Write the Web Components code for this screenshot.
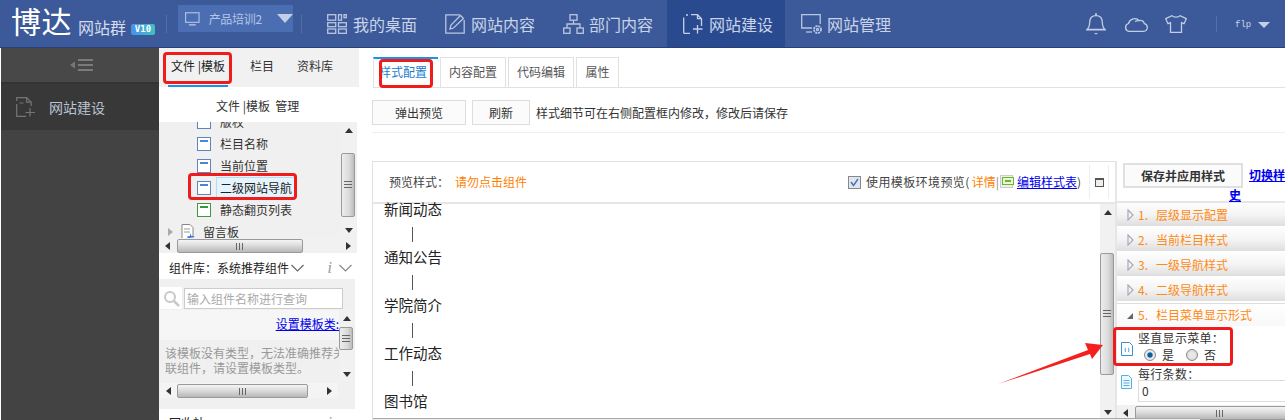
<!DOCTYPE html>
<html lang="zh-CN"><head><meta charset="utf-8"><title>博达网站群</title>
<style>
html,body{margin:0;padding:0;background:#fff}
body{width:1285px;height:420px;overflow:hidden;font:12px/16px "Noto Sans CJK SC","Liberation Sans",sans-serif;color:#333}
</style></head><body>
<app-shell>
  <app-header slot="header">
    <nav-item label="我的桌面" icon="desk"></nav-item>
    <nav-item label="网站内容" icon="edit"></nav-item>
    <nav-item label="部门内容" icon="org" style="width:120px"></nav-item>
    <nav-item label="网站建设" icon="file" active></nav-item>
    <nav-item label="网站管理" icon="mon"></nav-item>
  </app-header>
  <side-rail slot="rail"></side-rail>
  <file-panel slot="panel"></file-panel>
  <main-pane slot="main"></main-pane>
</app-shell>
<script>
const FONT='"Noto Sans CJK SC","Liberation Sans",sans-serif';
function def(tag,css,html,init){
  customElements.define(tag,class extends HTMLElement{
    connectedCallback(){
      if(this.shadowRoot)return;
      const r=this.attachShadow({mode:'open'});
      r.innerHTML='<style>'+css+'</style>'+(typeof html==='function'?html(this):html);
      if(init)init(this,r);
    }
  });
}
const icons={
 desk:'<svg width="20" height="20" viewBox="0 0 20 20" fill="none" stroke="#b9c6e2" stroke-width="1.3"><rect x=".7" y=".7" width="8" height="5.5"/><rect x="11.5" y=".7" width="3" height="5.5"/><rect x="17" y=".7" width="2.3" height="3"/><rect x=".7" y="8.7" width="8" height="4"/><rect x=".7" y="15" width="8" height="4.3"/><rect x="11.5" y="8.7" width="7.8" height="4"/><rect x="11.5" y="15" width="7.8" height="4.3"/></svg>',
 edit:'<svg width="20" height="20" viewBox="0 0 20 20" fill="none" stroke="#b9c6e2" stroke-width="1.3"><path d="M15 .8H.8v18.4h18.4V6"/><path d="M5 15l1-4L15.500 1.500l3 3L8.500 14z"/></svg>',
 org:'<svg width="21" height="20" viewBox="0 0 21 20" fill="none" stroke="#b9c6e2" stroke-width="1.3"><rect x="7" y=".7" width="7" height="5.500"/><path d="M10.500 6.200V10M4 14v-4h13v4"/><rect x=".7" y="14" width="6.300" height="5.300"/><rect x="14" y="14" width="6.300" height="5.300"/></svg>',
 file:'<svg width="20" height="20" viewBox="0 0 20 20" fill="none" stroke="#c6d0e8" stroke-width="1.3"><path d="M8 .7h6.500l4 4V12M7 19.300H1.500a.8.8 0 0 1-.8-.8V3.500M14.500.7v4h4M3 1h2"/><path d="M14.500 11v8.500M10 15h9.500"/></svg>',
 mon:'<svg width="21" height="20" viewBox="0 0 21 20" fill="none" stroke="#b9c6e2" stroke-width="1.3"><path d="M11 14H.7V.7h18.500V10"/><path d="M5 18h6"/><circle cx="16.500" cy="15.500" r="3.500" stroke-width="1.800" stroke-dasharray="2 .8"/><circle cx="16.500" cy="15.500" r="1"/></svg>'
};

def('app-shell',`:host{display:grid;grid-template:48px 372px/159px 200px 926px;width:1285px;height:420px;overflow:hidden;position:relative}
::slotted([slot=header]){grid-column:1/4}
.mark{position:absolute;box-sizing:border-box;border:3px solid #f01c1c;border-radius:4px;pointer-events:none}
svg{position:absolute;left:0;top:0;pointer-events:none}
.line{position:absolute;left:373px;top:418px;width:827px;height:2px;background:linear-gradient(#a9a9a9 50%,#eee 50%)}`,
`<slot name="header"></slot><slot name="rail"></slot><slot name="panel"></slot><slot name="main"></slot>
<div class="line"></div>
<div class="mark" style="left:163px;top:52px;width:69px;height:32px"></div>
<div class="mark" style="left:379px;top:59px;width:54px;height:29px"></div>
<div class="mark" style="left:188px;top:173px;width:109px;height:27px"></div>
<div class="mark" style="left:1113px;top:327px;width:120px;height:39px"></div>
<svg width="1285" height="420"><polygon fill="#f5201d" points="998,384 1088,350 1085,343 1103,345 1092,359 1090,354"/></svg>`);

def('app-header',`:host{display:flex;align-items:stretch;height:48px;box-sizing:border-box;background:#3c5a99;border-bottom:1px solid #27407a;color:#c9d3ea;font-family:${FONT}}
.logo{display:flex;align-items:flex-end;width:159px;box-sizing:border-box;padding:0 0 10px 11px;flex:none}
.bd{color:#fff;font-size:30px;line-height:34px;font-weight:400;letter-spacing:.5px;width:67px;flex:none}
.q{font-size:16px;line-height:20px;width:49px;flex:none;margin-bottom:0;color:#d4dcee}
.v{font:bold 9px/11px "DejaVu Sans Mono",monospace;color:#fff;background:linear-gradient(90deg,#4a90e8,#3fc2c2);border-radius:2px;padding:0 3px;margin:0 0 2px 4px;width:18px;text-align:center}
.div{width:1px;background:#5470aa;height:18px;align-self:center;flex:none}
.sel{display:flex;align-items:center;margin:5px 0 15px 11px;width:115px;background:#4b6eb3;box-sizing:border-box;padding-left:7px;flex:none;font-size:12px;line-height:16px;color:#b7c5e4}
.sel span{margin-left:9px;width:66px;letter-spacing:-.3px}
.tri{width:0;height:0;border:8px solid transparent;border-top:9px solid #c3cfe9;border-bottom:0}
.nav{display:flex;flex:none;margin-left:9px}
.right{display:flex;flex:1;align-items:center;justify-content:flex-end;padding:0 15px 0 0}
.right svg{flex:none}
.user{font:9px/14px "Liberation Mono",monospace;color:#c9d3ea;margin:3px 7px 0 0;width:16px}
.right .tri{border-width:6px 6px 0;border-top-color:#c3cfe9;margin-top:2px}`,
`<div class="logo"><span class="bd">博达</span><span class="q">网站群</span><span class="v">V10</span></div>
<div class="div" style="margin-left:7px"></div>
<div class="sel"><svg width="15" height="14" viewBox="0 0 15 14" fill="none" stroke="#b0bfe0" stroke-width="1.200"><rect x=".6" y=".6" width="13.800" height="9.800"/><path d="M4 13h7" stroke-width="1.500"/></svg><span>产品培训2</span><i class="tri" style="margin-left:4px"></i></div>
<div class="div" style="margin-left:8px"></div>
<div class="nav" style="margin-left:9px"><slot></slot></div>
<div class="right">
<svg width="20" height="22" viewBox="0 0 20 22" fill="none" stroke="#c2cde6" stroke-width="1.300" style="margin-right:18px"><path d="M1 16.500c2.500-2 2.500-4 2.800-8C4.100 4.500 6.500 2.700 10 2.700s5.900 1.800 6.200 5.800c.3 4 .3 6 2.800 8zM0 16.800h20"/><path d="M10 .3v2.300" stroke-width="1.800"/><path d="M8 20h4l-2 1.500z" fill="#c2cde6" stroke="none"/></svg>
<svg width="24" height="16" viewBox="0 0 24 16" fill="none" stroke="#c2cde6" stroke-width="1.300" style="margin-right:17px"><path d="M5 15.300h14.500a3.900 3.900 0 0 0 .8-7.700 3.800 3.800 0 0 0-5-3A6.500 6.500 0 0 0 4.500 7.500 4 4 0 0 0 5 15.300zM11 5.500c1.500-.8 3-1 4.300-.9"/></svg>
<svg width="22" height="18" viewBox="0 0 22 18" fill="none" stroke="#c2cde6" stroke-width="1.300" style="margin-right:29px"><path d="M7 .7C8 2.500 14 2.500 15 .7l6.300 3-2.300 5-2.500-1v9.600H5.500V7.700L3 8.700.7 3.700z"/></svg>
<div class="div" style="height:16px;margin-right:18px"></div>
<span class="user">flp</span><i class="tri"></i></div>`);

def('nav-item',`:host{display:flex;align-items:center;width:118px;box-sizing:border-box;height:47px;padding:0 0 0 16px;font-size:16px;line-height:20px;color:#c9d3ea;flex:none}
:host([active]){background:#2a4a90}
.i{width:26px;flex:none;display:flex}
span{white-space:nowrap}`,
t=>`<div class="i">${icons[t.getAttribute('icon')]}</div><span>${t.getAttribute('label')}</span>`);

def('side-rail',`:host{display:flex;flex-direction:column;height:372px;background:#434343;border-left:1px solid #fff;box-sizing:border-box;color:#b5bfd0}
.top{height:34px;background:#484848;border-bottom:2px solid #333;display:flex;align-items:center;justify-content:center;flex:none;padding-left:4px;box-sizing:content-box}
.row{display:flex;align-items:center;height:46px;background:#383838;padding-left:15px;font-size:14px;flex:none}
.row span{margin-left:13px;color:#b9c3d2}`,
`<div class="top"><svg width="24" height="14" viewBox="0 0 24 14"><path d="M0 7l5-3.500v7z" fill="#777"/><path d="M8 2h15M8 7h15M8 12h15" stroke="#8a8a8a" stroke-width="1.500"/></svg></div>
<div class="row"><svg width="20" height="20" viewBox="0 0 20 20" fill="none" stroke="#757575" stroke-width="1.200"><path d="M.7 7V19.300H10M.7 4V.7h10l4.500 4.500V9M10.700.7v4.500h4.500M3.500 6h4"/><path d="M14 11v8.500M9.500 15.500h9.500"/></svg><span>网站建设</span></div>`);

def('x-scroll',`:host{display:flex;flex:none;background:#f1f1f1;box-sizing:border-box;align-items:stretch}
:host([dir=h]){height:15px;flex-direction:row}
:host([dir=v]){width:15px;flex-direction:column}
.a{flex:none;display:flex;align-items:center;justify-content:center}
:host([dir=h]) .a{width:17px}
:host([dir=v]) .a{height:16px}
i{width:0;height:0;border:4px solid transparent;display:block}
.tk{flex:1;display:flex;min-width:0;min-height:0}
:host([dir=v]) .tk{flex-direction:column}
.th{box-sizing:border-box;border:1px solid #9a9a9a;border-radius:2px;display:flex;align-items:center;justify-content:center;flex:none}
:host([dir=h]) .th{background:linear-gradient(#f5f5f5,#dcdcdc 45%,#b8b8b8);height:14px;margin-top:1px}
:host([dir=v]) .th{background:linear-gradient(90deg,#ededed,#dadada 60%,#bcbcbc);width:14px;margin-left:0}
:host([dir=h]) .g{width:8px;height:7px;background:repeating-linear-gradient(90deg,#666 0 1px,transparent 1px 3px)}
:host([dir=v]) .g{width:8px;height:8px;background:repeating-linear-gradient(#666 0 1px,transparent 1px 3px)}`,
t=>{const h=t.getAttribute('dir')==='h',s=+t.getAttribute('start'),l=+t.getAttribute('len');
 const st=h?`margin-left:${s}px;width:${l}px`:`margin-top:${s}px;height:${l}px`;
 const a=h?'border-left:0;border-right-color:#333;border-right-width:5px':'border-top:0;border-bottom-color:#333;border-bottom-width:5px';
 const b=h?'border-right:0;border-left-color:#333;border-left-width:5px':'border-bottom:0;border-top-color:#333;border-top-width:5px';
 return `<div class="a"><i style="${a}"></i></div><div class="tk"><div class="th" style="${st}"><div class="g"></div></div></div><div class="a"><i style="${b}"></i></div>`});

const leaf=(c)=>`<svg width="14" height="14" viewBox="0 0 14 14"><rect x=".5" y=".5" width="13" height="13" fill="#fff" stroke="${c}"/><rect x="3" y="3" width="8" height="2" fill="${c==='#3f9a3f'?'#2f9a3a':'#4a86d8'}"/></svg>`;
def('file-panel',`:host{display:flex;flex-direction:column;width:200px;height:372px;background:#fff;overflow:hidden;font-size:12px;color:#333}
.tabs{height:39px;background:#f1f1f1;display:flex;flex:none;box-sizing:border-box;padding-top:10px;line-height:16px}
.tabs span{position:relative;white-space:nowrap}
.t1{width:60px;margin-left:9px;text-align:center;border-bottom:2px solid #1a92e8;height:27px;box-sizing:content-box;color:#222}
.t2{margin-left:22px}.t3{margin-left:23px}
.h{height:35px;line-height:37px;flex:none;padding-left:57px;color:#333;box-sizing:border-box;white-space:nowrap}
.tree{height:116px;display:flex;background:#f0f0f0;flex:none;margin-right:2px;overflow:hidden}
.lst{width:182px;flex:none;overflow:hidden;display:flex;flex-direction:column}
.r{height:22px;display:flex;align-items:center;padding-left:38px;flex:none;white-space:nowrap}
.r svg{margin-right:9px;flex:none}
.r b{font-weight:400;line-height:20px;height:20px;padding:0 3px;margin-left:-4px;background:#e6f4fd;border:1px solid #b7dcf2;color:#222;box-sizing:content-box;margin-right:-2px;width:72px;overflow:hidden}
.r.p{padding-left:9px}.r.p em{width:0;height:0;border:4px solid transparent;border-left:5px solid #aaa;border-right:0;margin-right:8px}
.lib{flex:none;height:24px;display:flex;align-items:center;padding:2px 7px 0 10px;margin-top:2px;background:#fff;white-space:nowrap;color:#222;box-sizing:border-box}
.chev{margin-left:2px}.ii{font:italic 16px/16px "Liberation Serif",serif;color:#999;margin-left:auto;margin-right:7px}
.body{flex:none;height:130px;background:#f0f0f0;margin-right:4px;padding-left:1px;display:flex;flex-direction:column}
.s{display:flex;align-items:flex-start;height:31px;flex:none;padding-top:9px;box-sizing:border-box}
.s .ic{width:22px;height:22px;background:#fff;flex:none;display:flex;align-items:center;justify-content:center}
.s input{width:159px;height:21px;box-sizing:border-box;border:1px solid #ccc;background:#fff;padding:0 2px;margin:0 0 0 2px;font:12px ${FONT};outline:0}
.s input::placeholder{color:#aaa;opacity:1}
.mid{display:flex;height:73px;flex:none}
.info{width:179px;flex:none;overflow:hidden;background:#f0f0f0}
.lnk{height:30px;background:#f6f6f6;text-align:right;padding-top:6px;box-sizing:border-box;line-height:16px}
.lnk a{color:#00e;text-decoration:underline}
.msg{color:#999;line-height:15px;padding:5px 0 0 5px;white-space:nowrap}
.foot{background:#fff;display:flex;padding:4px 7px 0 10px;color:#222;line-height:16px;height:16px;flex:none;margin-top:2px;overflow:hidden}`,
`<div class="tabs"><span class="t1">文件 |模板</span><span class="t2">栏目</span><span class="t3">资料库</span></div>
<div class="h">文件 |模板 &nbsp;管理</div>
<div class="tree"><div class="lst">
<div class="r" style="height:11px;align-items:flex-end;overflow:hidden"><span style="display:flex;align-items:center;height:22px;flex:none;margin-bottom:0">${leaf('#5f82c0')}<span>版权</span></span></div>
<div class="r">${leaf('#5f82c0')}栏目名称</div>
<div class="r">${leaf('#5f82c0')}当前位置</div>
<div class="r">${leaf('#5f82c0')}<b>二级网站导航</b></div>
<div class="r">${leaf('#3f9a3f')}静态翻页列表</div>
<div class="r p"><em></em><svg width="15" height="16" viewBox="0 0 15 16" style="margin-right:7px"><path d="M1 .5h8l3 3V15H1z" fill="#fff" stroke="#888"/><path d="M3 5h6M3 8h6" stroke="#999"/><path d="M9 9l1.500 3H14l-3 1.500-4 1-1-2 3-.5z" fill="#2f7fe0"/></svg>留言板</div>
</div><x-scroll dir="v" start="15" len="64" style="height:116px"></x-scroll></div>
<x-scroll dir="h" start="1" len="126" style="width:198px"></x-scroll>
<div class="lib">组件库：系统推荐组件<svg class="chev" width="13" height="8" viewBox="0 0 13 8" fill="none" stroke="#666" stroke-width="1.200"><path d="M.5 1l6 6 6-6"/></svg><span class="ii">i</span><svg width="13" height="8" viewBox="0 0 13 8" fill="none" stroke="#888" stroke-width="1.200"><path d="M.5 1l6 6 6-6"/></svg></div>
<div class="body">
<div class="s"><div class="ic" style="margin-top:-1px"><svg width="17" height="17" viewBox="0 0 17 17" fill="none" stroke="#c8c8c8" stroke-width="2"><circle cx="7" cy="7" r="5"/><path d="M11 11l5 5" stroke-width="2.500"/></svg></div><input placeholder="输入组件名称进行查询"></div>
<div class="mid"><div class="info"><div class="lnk"><a>设置模板类:</a></div><div class="msg">该模板没有类型，无法准确推荐关<br>联组件，请设置模板类型。</div></div>
<x-scroll dir="v" start="1" len="23" style="height:72px"></x-scroll></div>
<x-scroll dir="h" start="0" len="131" style="width:178px;background:#f4f4f4"></x-scroll>
</div>
<div class="foot"><span>回收站</span><span class="ii">i</span><svg width="13" height="8" viewBox="0 0 13 8" fill="none" stroke="#888" stroke-width="1.200" style="margin-top:5px"><path d="M.5 1l6 6 6-6"/></svg></div>`);

def('main-pane',`:host{display:flex;flex-direction:column;width:926px;height:372px;background:#fff;font-size:12px;overflow:hidden}
.tabs{display:flex;height:31px;margin:9px 0 0 14px;border-bottom:1px solid #e1e1e1;flex:none;box-sizing:border-box;gap:2px}
.tabs span{box-sizing:border-box;height:30px;border:1px solid #e1e1e1;border-bottom:0;line-height:28px;text-align:center;color:#555;flex:none}
.tabs .on{width:65px;border:0;border-top:2px solid #1a92e8;color:#1a7cd0;border-left:1px solid #e1e1e1;line-height:26px;padding-right:6px}
.tb{display:flex;align-items:center;height:45px;border-bottom:1px solid #eee;margin-left:13px;box-sizing:border-box;flex:none;padding-bottom:7px;padding-top:12px}
.tb button{height:25px;box-sizing:border-box;border:1px solid #ddd;background:#fbfbfb;font:12px ${FONT};color:#333;padding:0;flex:none}
.tb span{margin-left:6px;color:#333;white-space:nowrap}
.pv{display:flex;margin:28px 0 0 13px;flex:1;min-height:0}
.l{width:743px;flex:none;border-left:1px solid #e1e1e1;border-top:1px solid #e1e1e1;display:flex;flex-direction:column;box-sizing:border-box;overflow:hidden}
.lh{height:40px;flex:none;border-bottom:2px solid #e6e6e6;display:flex;align-items:center;padding-left:16px;color:#444;white-space:nowrap}
.or{color:#ff7f00}
.lh .o{margin-left:6px;color:#ff7f00}
.chk{margin-left:auto;width:13px;height:13px;box-sizing:border-box;border:1px solid #888;background:#dfe6f0;display:flex;flex:none}
.tx{margin-left:5px;color:#444}
.tx .ls{letter-spacing:.4px;margin-right:2px}
.tx a{color:#00e;text-decoration:underline}
.css{display:inline-flex;vertical-align:-1px;margin:0 1px 0 1px;width:11px;height:11px;border:1px solid #ccc;background:#eee;position:relative}
.bx{width:18px;height:34px;border-left:1px solid #e6f0f8;border-right:1px solid #e6f0f8;margin:0 6px 0 8px;display:flex;align-items:center;justify-content:center;flex:none}
.bx i{width:9px;height:9px;border:1px solid #555;border-top-width:2px;box-sizing:border-box;background:#eee}
.lb{flex:1;display:flex;min-height:0}
.list{flex:1;overflow:hidden;padding-left:11px;font-size:14.500px;color:#222;display:flex;flex-direction:column;margin-top:-7px}
.list p{margin:0;height:24px;line-height:24px;flex:none}
.list u{display:block;height:24px;flex:none;text-decoration:none}
.list u:before{content:"";display:block;width:1px;height:15px;background:#555;margin:6px 0 0 28px}
.r{flex:1;border-left:2px solid #e6e6e6;display:flex;flex-direction:column;box-sizing:border-box;overflow:hidden;min-width:0}
.rh{height:38px;flex:none;border-bottom:2px solid #e6e6e6;display:flex;white-space:nowrap;padding:2px 0 0 6px;position:relative}
.rh button{height:25px;width:120px;box-sizing:border-box;border:2px solid #e0e0e0;background:#fbfbfb;font:bold 12px ${FONT};color:#333;padding:0;flex:none}
.rh a{color:#00e;font-weight:700;text-decoration:underline;margin-left:6px;margin-top:4px;line-height:16px;width:36px;overflow:hidden}
.rh .sh{position:absolute;left:112px;top:26px;color:#00e;font-weight:700;text-decoration:underline;line-height:15px}
.acc{flex:1;display:flex;flex-direction:column;min-height:0;overflow:hidden}
.body{flex:1;display:flex;flex-direction:column;min-height:0;padding-left:4px;line-height:14px;color:#333}
.f{display:flex}.f .ic{width:17px;flex:none}
.rad{display:flex;align-items:center;padding-left:6px;margin-top:3px;line-height:14px}
.rd{width:12px;height:12px;border-radius:50%;border:1px solid #8a8a8a;background:radial-gradient(circle,#e8e8e8 40%,#c8c8c8);box-sizing:border-box;margin-right:6px;flex:none}
.rd.on{background:radial-gradient(circle,#0a5f9f 30%,#e8e8e8 45%)}
.in{height:22px;border:1px solid #ddd;box-sizing:border-box;margin-top:-1px;line-height:20px;padding-left:3px;width:200px;color:#333}`,
`<div class="tabs"><span class="on">样式配置</span><span style="width:66px">内容配置</span><span style="width:66px">代码编辑</span><span style="width:43px">属性</span></div>
<div class="tb"><button style="width:94px">弹出预览</button><button style="width:58px;margin-left:6px">刷新</button><span>样式细节可在右侧配置框内修改，修改后请保存</span></div>
<div class="pv">
<div class="l"><div class="lh"><span>预览样式：</span><span class="o">请勿点击组件</span>
<span class="chk"><svg width="11" height="11" viewBox="0 0 11 11" fill="none" stroke="#5170b5" stroke-width="1.500"><path d="M2 5l2.500 3.500L9 2"/></svg></span>
<span class="tx"><span class="ls">使用模板环境预览(</span><span class="or">详情</span><span style="color:#888">|</span><span class="css"><svg width="17" height="8" viewBox="0 0 17 8" style="position:absolute;left:1px;top:1px"><rect x=".5" y=".5" width="11" height="7" fill="#e8f8d8" stroke="#6fb52c"/><rect x="3" y="3" width="6" height="2" fill="#6fb52c"/></svg></span><a style="margin-left:3px">编辑样式表</a>)</span>
<span class="bx"><i></i></span></div>
<div class="lb"><div class="list"><p>新闻动态</p><u></u><p>通知公告</p><u></u><p>学院简介</p><u></u><p>工作动态</p><u></u><p>图书馆</p></div>
<x-scroll dir="v" start="33" len="122" style="height:216px"></x-scroll></div></div>
<div class="r"><div class="rh"><button>保存并应用样式</button><a>切换样式</a><span class="sh">史</span></div>
<div class="acc">
<acc-row n="1." t="层级显示配置"></acc-row><acc-row n="2." t="当前栏目样式"></acc-row><acc-row n="3." t="一级导航样式"></acc-row><acc-row n="4." t="二级导航样式"></acc-row><acc-row n="5." t="栏目菜单显示形式" open></acc-row>
<div class="body">
<div class="f" style="margin-top:3px;height:36px"><span class="ic" style="padding-top:11px"><svg width="12" height="14" viewBox="0 0 12 14" fill="none" stroke="#3a8fd8" stroke-width="1"><path d="M.5.5h8l3 3v10H.5z"/><path d="M5 6c-1 0-.5 1.500-1 2 .5.500 0 2 1 2M7 6c1 0 .5 1.500 1 2-.5.500 0 2-1 2"/></svg></span><div><div style="letter-spacing:.3px">竖直显示菜单：</div><div class="rad"><span class="rd on"></span><span>是</span><span class="rd" style="margin-left:12px">&nbsp;</span><span>否</span></div></div></div>
<div class="f"><span class="ic" style="padding-top:8px"><svg width="11" height="14" viewBox="0 0 11 14" fill="none" stroke="#5aaee0" stroke-width="1"><path d="M.5.5h7l3 3v10H.500z" fill="#eef7fd"/><path d="M2.500 5.500h6M2.500 8h6M2.500 10.500h6"/></svg></span><div><div style="letter-spacing:.3px;height:14px">每行条数：</div><div class="in">0</div></div></div>
</div></div>
<x-scroll dir="h" start="1" len="170" style="width:190px"></x-scroll>
</div></div>`);

def('acc-row',`:host{display:flex;align-items:center;height:23px;flex:none;margin-bottom:2px;box-sizing:border-box;background:linear-gradient(#fdfdfd,#f4f4f4 50%,#dedede);padding-left:10px;white-space:nowrap;color:#ff8a14}
:host([open]){background:linear-gradient(#fff,#f8f8f8);border-top:1px solid #ddd}
svg{flex:none;margin-right:4px}
.n{width:18px;flex:none}`,
t=>`${t.hasAttribute('open')?'<svg width="7" height="12" viewBox="0 0 7 12"><path d="M0 10l6-6v6z" fill="#666"/></svg>':'<svg width="7" height="12" viewBox="0 0 7 12"><path d="M1 1l5 5-5 5z" fill="#f4f4f4" stroke="#a5abb8" stroke-width="1.200"/></svg>'}<span class="n">${t.getAttribute('n')}</span><span>${t.getAttribute('t')}</span>`);
</script>
</body></html>
